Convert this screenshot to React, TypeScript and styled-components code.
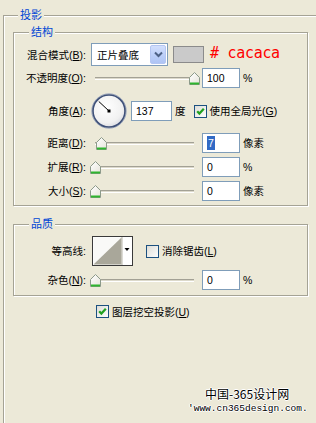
import React from "react";
import styled, { createGlobalStyle } from "styled-components";

const Global = createGlobalStyle`
  html, body { margin: 0; padding: 0; background: #ECE9D8; overflow: hidden; }
  body {
    font-family: "Liberation Sans", "Noto Sans CJK SC", sans-serif;
    font-size: 10.5px;
    color: #000;
  }
  * { box-sizing: border-box; }
`;

const Page = styled.div`
  width: 316px;
  height: 423px;
  overflow: hidden;
  padding: 15px 0 0 3px;
`;

const Group = styled.div<{ $w: number; $pt: number; $pb: number; $pl: number; $mt?: number; $minH?: number }>`
  position: relative;
  width: ${(p) => p.$w}px;
  min-height: ${(p) => p.$minH ?? 0}px;
  margin-top: ${(p) => p.$mt ?? 0}px;
  padding: ${(p) => `${p.$pt}px 0 ${p.$pb}px ${p.$pl}px`};
  border: 1px solid #A5A395;
  box-shadow: inset 1px 1px 0 #fff, 1px 1px 0 #fff;
  display: flex;
  flex-direction: column;
`;

const Legend = styled.span<{ $left: number }>`
  position: absolute;
  top: -8px;
  left: ${(p) => p.$left}px;
  padding: 0 2px;
  font-size: 11px;
  line-height: 14px;
  background: #ECE9D8;
  color: #0046D5;
  white-space: nowrap;
`;

const Row = styled.div<{ $h: number; $mt?: number; $pl?: number }>`
  display: flex;
  align-items: center;
  height: ${(p) => p.$h}px;
  margin-top: ${(p) => p.$mt ?? 0}px;
  padding-left: ${(p) => p.$pl ?? 0}px;
  white-space: nowrap;
`;

const Label = styled.span<{ $gap?: number }>`
  width: 72px;
  flex-shrink: 0;
  text-align: right;
  margin-right: ${(p) => p.$gap ?? 5}px;
  line-height: 14px;
`;

const Key = styled.span`
  text-decoration: underline;
`;

const Combo = styled.div`
  width: 77px;
  height: 23px;
  flex-shrink: 0;
  border: 1px solid #7F9DB9;
  background: #fff;
  display: flex;
  align-items: stretch;
  padding: 1px;
`;

const ComboText = styled.span`
  flex: 1;
  padding-left: 4px;
  display: flex;
  align-items: center;
`;

const ComboButton = styled.span`
  width: 16px;
  border: 1px solid #B4C6F2;
  border-radius: 2px;
  background: linear-gradient(180deg, #D2DFFD 0%, #B9CDF8 60%, #AFC4F4 100%);
  display: flex;
  align-items: center;
  justify-content: center;
`;

const Swatch = styled.div`
  width: 31px;
  height: 17px;
  margin-left: 5px;
  flex-shrink: 0;
  border: 1px solid #8B8B8B;
  background: #CACACA;
`;

const HexNote = styled.span`
  margin-left: 6px;
  font-family: "DejaVu Sans Mono", monospace;
  font-size: 15px;
  line-height: 15px;
  color: #FF0000;
  margin-bottom: 3px;
  white-space: pre;
  letter-spacing: -0.3px;
`;

const SliderBox = styled.div`
  position: relative;
  width: 108px;
  height: 20px;
  flex-shrink: 0;
  display: flex;
  align-items: center;
  padding: 0 5px 0 4px;
`;

const Track = styled.div`
  flex: 1;
  height: 3px;
  margin-top: 1px;
  border-top: 1px solid #A3A195;
  border-bottom: 1px solid #FFFFFF;
  background: #DCD9CB;
`;

const ThumbWrap = styled.span`
  position: absolute;
  top: 4px;
  width: 11px;
  height: 13px;
  display: block;
`;

const NumField = styled.div<{ $w: number; $ml: number }>`
  width: ${(p) => p.$w}px;
  height: 20px;
  margin-left: ${(p) => p.$ml}px;
  flex-shrink: 0;
  border: 1px solid #7F9DB9;
  background: #fff;
  padding-left: 4px;
  display: flex;
  align-items: center;
  line-height: 14px;
`;

const Selected = styled.span`
  background: #316AC5;
  color: #fff;
  padding: 0 1px;
`;

const Unit = styled.span<{ $ml?: number }>`
  margin-left: ${(p) => p.$ml ?? 3}px;
  line-height: 14px;
`;

const BoxWrap = styled.span<{ $ml: number }>`
  width: 13px;
  height: 13px;
  margin-left: ${(p) => p.$ml}px;
  flex-shrink: 0;
  display: block;
`;

const CheckText = styled.span`
  margin-left: 3px;
  line-height: 14px;
`;

const Watermark = styled.div<{ $indent: number; $mt?: number }>`
  padding-left: ${(p) => p.$indent}px;
  margin-top: ${(p) => p.$mt ?? 0}px;
  white-space: nowrap;
  text-shadow: 1px 0 #fff, -1px 0 #fff, 0 1px #fff, 0 -1px #fff;
`;

const WaterTitle = styled.span`
  font-family: "Noto Sans CJK SC", sans-serif;
  font-size: 12px;
  line-height: 14px;
`;

const WaterUrl = styled.span`
  font-family: "Liberation Mono", "DejaVu Sans Mono", monospace;
  font-size: 9.5px;
  line-height: 12px;
`;

const Thumb: React.FC<{ pct: number }> = ({ pct }) => {
  const left = 4 + pct * 99 - 5;
  return (
    <ThumbWrap style={{ left }}>
      <svg width="11" height="13" viewBox="0 0 11 13">
        <defs>
          <linearGradient id="thumbFill" x1="0" y1="0" x2="1" y2="1">
            <stop offset="0" stopColor="#FFFFFF" />
            <stop offset="1" stopColor="#E6E4DA" />
          </linearGradient>
        </defs>
        <polygon points="5.5,0.5 10.5,5.5 10.5,12.5 0.5,12.5 0.5,5.5" fill="url(#thumbFill)" stroke="#8C9A8A" />
        <line x1="1" y1="11.5" x2="10" y2="11.5" stroke="#2FB52F" strokeWidth="2" />
      </svg>
    </ThumbWrap>
  );
};

const Slider: React.FC<{ pct: number }> = ({ pct }) => (
  <SliderBox>
    <Track />
    <Thumb pct={pct} />
  </SliderBox>
);

const CheckBox: React.FC<{ checked?: boolean; ml: number }> = ({ checked, ml }) => (
  <BoxWrap $ml={ml}>
    <svg width="13" height="13" viewBox="0 0 13 13">
      <defs>
        <linearGradient id="cbFill" x1="0" y1="0" x2="1" y2="1">
          <stop offset="0" stopColor="#DCDCD6" />
          <stop offset="1" stopColor="#FFFFFF" />
        </linearGradient>
      </defs>
      <rect x="0.5" y="0.5" width="12" height="12" fill="url(#cbFill)" stroke="#1C5180" />
      {checked && (
        <path d="M3.2 6.2 L5.4 8.6 L9.8 3.8" fill="none" stroke="#21A121" strokeWidth="2.2" />
      )}
    </svg>
  </BoxWrap>
);

const Dial: React.FC<{ angle: number }> = ({ angle }) => {
  const r = (angle * Math.PI) / 180;
  const x2 = 18 + 14 * Math.cos(r);
  const y2 = 18 - 14 * Math.sin(r);
  return (
    <svg width="36" height="36" viewBox="0 0 36 36" style={{ flexShrink: 0 }}>
      <defs>
        <radialGradient id="dialFill" cx="42%" cy="38%" r="70%">
          <stop offset="0" stopColor="#FFFFFF" />
          <stop offset="0.7" stopColor="#F1F1F1" />
          <stop offset="1" stopColor="#D3D5DD" />
        </radialGradient>
      </defs>
      <circle cx="18" cy="18" r="17.2" fill="none" stroke="#9AA6BE" strokeWidth="1" />
      <circle cx="18" cy="18" r="16" fill="url(#dialFill)" stroke="#3E5078" strokeWidth="1.6" />
      <line x1="18" y1="18" x2={x2} y2={y2} stroke="#000" strokeWidth="1" />
      <rect x="16.5" y="16.5" width="3" height="3" fill="#000" />
    </svg>
  );
};

const ContourPicker: React.FC = () => (
  <svg width="41" height="30" viewBox="0 0 41 30" style={{ flexShrink: 0 }}>
    <rect x="0.5" y="0.5" width="40" height="29" fill="#FFFFFF" stroke="#3A3A3A" />
    <rect x="1.5" y="1.5" width="28" height="27" fill="#F9F9F7" />
    <polygon points="1.5,28.5 29.5,1.5 29.5,28.5" fill="#A9A79A" />
    <line x1="30" y1="1" x2="30" y2="29" stroke="#B8B6AA" />
    <polygon points="32.5,12 37.5,12 35,15" fill="#000" />
  </svg>
);

const ChevronDown: React.FC = () => (
  <svg width="9" height="7" viewBox="0 0 9 7">
    <path d="M1 1.5 L4.5 5 L8 1.5" fill="none" stroke="#4D6185" strokeWidth="2" />
  </svg>
);

export default function App() {
  return (
    <>
      <Global />
      <Page>
        <Group $w={340} $pt={16} $pb={0} $pl={9} $minH={440}>
          <Legend $left={14}>投影</Legend>

          <Group $w={295} $pt={10} $pb={4} $pl={0}>
            <Legend $left={15}>结构</Legend>

            <Row $h={23}>
              <Label>混合模式(<Key>B</Key>):</Label>
              <Combo>
                <ComboText>正片叠底</ComboText>
                <ComboButton>
                  <ChevronDown />
                </ComboButton>
              </Combo>
              <Swatch />
              <HexNote>{"# cacaca"}</HexNote>
            </Row>

            <Row $h={20} $mt={2}>
              <Label>不透明度(<Key>O</Key>):</Label>
              <Slider pct={1} />
              <NumField $w={38} $ml={3}>100</NumField>
              <Unit>%</Unit>
            </Row>

            <Row $h={36} $mt={5}>
              <Label>角度(<Key>A</Key>):</Label>
              <Dial angle={137} />
              <NumField $w={41} $ml={4}>137</NumField>
              <Unit>度</Unit>
              <CheckBox checked ml={8} />
              <CheckText>使用全局光(<Key>G</Key>)</CheckText>
            </Row>

            <Row $h={20} $mt={4}>
              <Label>距离(<Key>D</Key>):</Label>
              <Slider pct={0.06} />
              <NumField $w={38} $ml={3}>
                <Selected>7</Selected>
              </NumField>
              <Unit>像素</Unit>
            </Row>

            <Row $h={20} $mt={4}>
              <Label>扩展(<Key>R</Key>):</Label>
              <Slider pct={0} />
              <NumField $w={38} $ml={3}>0</NumField>
              <Unit>%</Unit>
            </Row>

            <Row $h={20} $mt={4}>
              <Label>大小(<Key>S</Key>):</Label>
              <Slider pct={0} />
              <NumField $w={38} $ml={3}>0</NumField>
              <Unit>像素</Unit>
            </Row>
          </Group>

          <Group $w={295} $pt={11} $pb={5} $pl={0} $mt={18}>
            <Legend $left={15}>品质</Legend>

            <Row $h={30}>
              <Label $gap={6}>等高线:</Label>
              <ContourPicker />
              <CheckBox ml={13} />
              <CheckText>消除锯齿(<Key>L</Key>)</CheckText>
            </Row>

            <Row $h={20} $mt={4}>
              <Label>杂色(<Key>N</Key>):</Label>
              <Slider pct={0} />
              <NumField $w={38} $ml={3}>0</NumField>
              <Unit>%</Unit>
            </Row>
          </Group>

          <Row $h={13} $mt={9} $pl={83}>
            <CheckBox checked ml={0} />
            <CheckText>图层挖空投影(<Key>U</Key>)</CheckText>
          </Row>

          <Watermark $indent={192} $mt={69}>
            <WaterTitle>中国-365设计网</WaterTitle>
          </Watermark>
          <Watermark $indent={175}>
            <WaterUrl>'www.cn365design.com.</WaterUrl>
          </Watermark>
        </Group>
      </Page>
    </>
  );
}
